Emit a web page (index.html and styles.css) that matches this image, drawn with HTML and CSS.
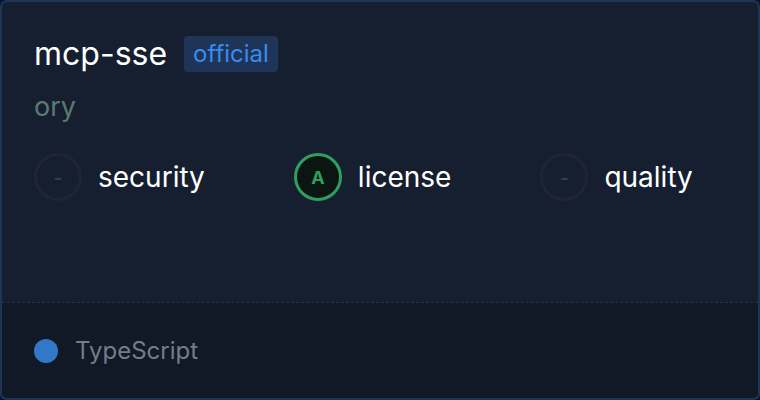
FILE: index.html
```html
<!DOCTYPE html>
<html lang="en">
  <head>
    <meta charset="UTF-8">
    <meta name="viewport" content="width=device-width, initial-scale=1.0">
    <title>mcp-sse</title>
    <link rel="stylesheet" href="styles.css">
  </head>
  <body>
    <div class="card">
      <div class="card-main">
        <div class="title-row">
          <span class="name">mcp-sse</span>
          <span class="badge">official</span>
        </div>
        <div class="owner">ory</div>
        <div class="scores">
          <div class="score">
            <span class="grade empty">-</span>
            <span class="label">security</span>
          </div>
          <div class="score">
            <span class="grade good">A</span>
            <span class="label">license</span>
          </div>
          <div class="score">
            <span class="grade empty">-</span>
            <span class="label">quality</span>
          </div>
        </div>
      </div>
      <div class="card-footer">
        <span class="lang-dot"></span>
        <span class="lang">TypeScript</span>
      </div>
    </div>
  </body>
</html>
```

FILE: styles.css
```css
html, body {
  margin: 0;
  padding: 0;
}
body {
  font-family: Inter, "Noto Sans", sans-serif;
  background: #0d1422;
}
.card {
  box-sizing: border-box;
  width: 760px;
  height: 400px;
  border: 2px solid #1e3558;
  border-radius: 7px;
  background: #161f30;
  display: flex;
  flex-direction: column;
  overflow: hidden;
}
.card-main {
  flex: 1;
  padding: 32px 32px 0 32px;
}
.title-row {
  display: flex;
  align-items: center;
  gap: 17px;
  height: 40px;
}
.name {
  color: #ffffff;
  font-size: 32px;
  line-height: 40px;
}
.badge {
  background: #1e3558;
  color: #3b8af0;
  font-size: 24px;
  line-height: 29px;
  padding: 3px 9px 4px 9px;
  border-radius: 4px;
}
.owner {
  color: #5d7a70;
  font-size: 27px;
  line-height: 33px;
  margin-top: 16px;
}
.scores {
  display: flex;
  gap: 89px;
  margin-top: 30px;
}
.score {
  display: flex;
  align-items: center;
  gap: 16px;
}
.grade {
  box-sizing: border-box;
  width: 48px;
  height: 48px;
  border-radius: 50%;
  border: 3px solid;
  display: flex;
  align-items: center;
  justify-content: center;
  font-size: 18px;
  font-weight: 700;
}
.grade.empty {
  border-color: #1f2632;
  color: #3a3f47;
}
.grade.good {
  border-color: #2f9e5f;
  background: #0b1612;
  color: #2f9e5f;
}
.label {
  color: #ffffff;
  font-size: 28px;
}
.card-footer {
  height: 95px;
  background: #111826;
  border-top: 1px dashed #2a3140;
  display: flex;
  align-items: center;
  gap: 17px;
  padding: 0 32px;
}
.lang-dot {
  width: 24px;
  height: 24px;
  border-radius: 50%;
  background: #3178c6;
}
.lang {
  color: #767c87;
  font-size: 24px;
}
```
